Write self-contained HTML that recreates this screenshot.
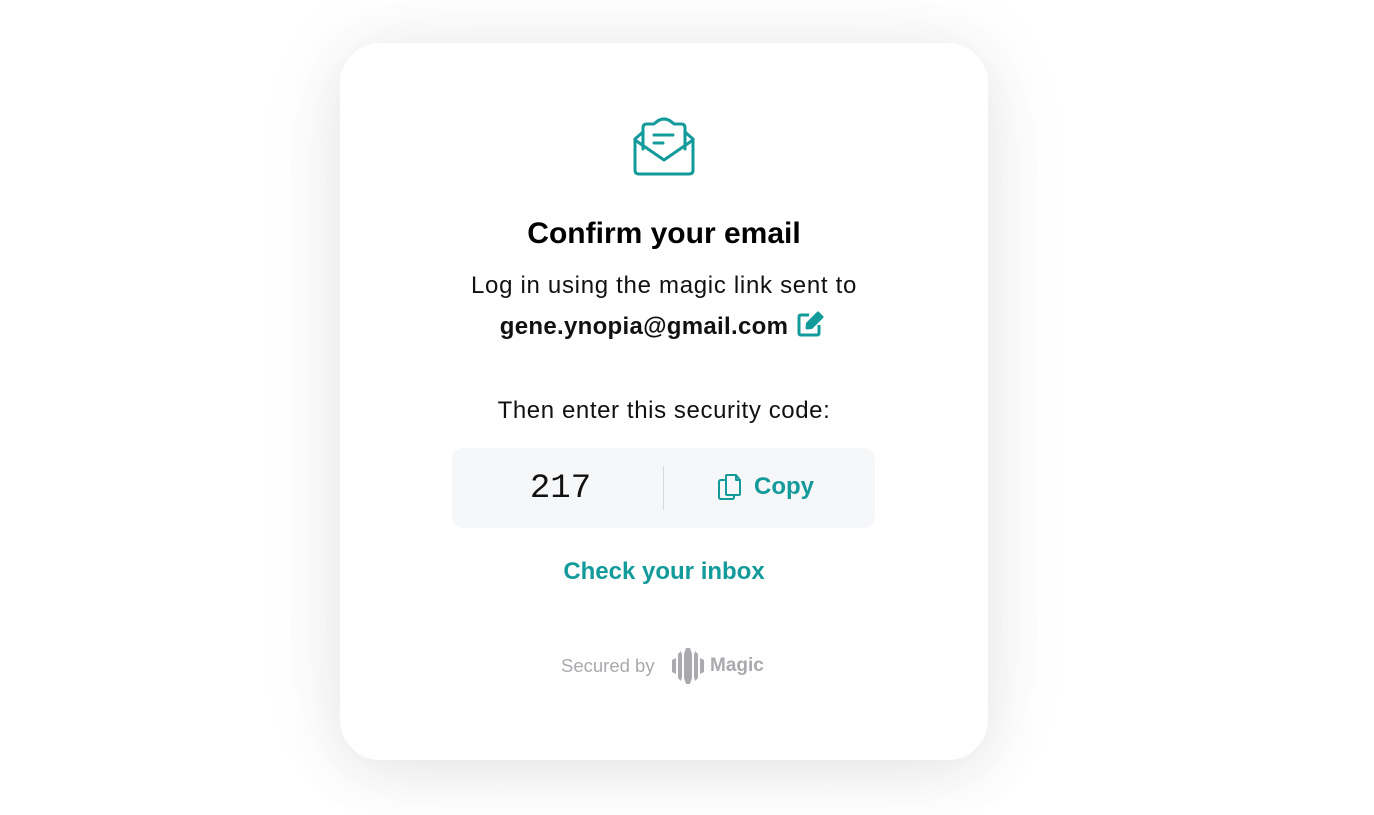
<!DOCTYPE html>
<html><head><meta charset="utf-8"><style>
html,body{margin:0;padding:0;width:1374px;height:815px;background:#fff;overflow:hidden;font-family:"Liberation Sans",sans-serif;}
.card{position:absolute;left:340px;top:43px;width:648px;height:717px;background:#fff;border-radius:40px;box-shadow:0 10px 60px rgba(0,0,0,0.09),0 0 120px rgba(0,0,0,0.04);}
.t{position:absolute;left:0;width:1328px;text-align:center;white-space:nowrap;}
.teal{color:#139a9a;}
</style></head><body>
<div class="card"></div>
<svg style="position:absolute;left:633px;top:114px" width="62" height="62" viewBox="0 0 62 62" fill="none" stroke="#139a9a" stroke-width="3" stroke-linejoin="round" stroke-linecap="round">
<path d="M2 25 L2 56 Q2 60 6 60 L56 60 Q60 60 60 56 L60 25"/>
<path d="M2 25 L10 18 M60 25 L52 18"/>
<path d="M2 26 L31 46 L60 26"/>
<path d="M10 35 L10 14 Q10 10 14 10 L21 10 Q31 0 41 10 L48 10 Q52 10 52 14 L52 35"/>
<path d="M21 21 L40 21 M21 29 L30 29"/>
</svg>
<div class="t" style="top:217px;font-size:30px;font-weight:bold;color:#000;">Confirm your email</div>
<div class="t" style="top:272px;font-size:24px;letter-spacing:0.7px;color:#111;">Log in using the magic link sent to</div>
<div class="t" style="top:313px;font-size:24px;letter-spacing:0.3px;font-weight:bold;color:#111;left:-20px;">gene.ynopia@gmail.com</div>
<svg style="position:absolute;left:797px;top:311px" width="27" height="26" viewBox="0 0 27 26" fill="none" stroke="#139a9a" stroke-width="3" stroke-linejoin="round">
<path d="M12 4 L4 4 Q2 4 2 6 L2 22 Q2 24 4 24 L20 24 Q22 24 22 22 L22 14"/>
<path d="M10 17 L10.5 12.5 L21 2 L25 6 L14.5 16.5 Z" fill="#139a9a"/>
</svg>
<div class="t" style="top:397px;font-size:24px;letter-spacing:0.6px;color:#111;">Then enter this security code:</div>
<div style="position:absolute;left:452px;top:448px;width:423px;height:80px;background:#f6f7f9;border-radius:11px;"></div>
<div style="position:absolute;left:663px;top:466px;width:1px;height:44px;background:#d8d8dc;"></div>
<div style="position:absolute;left:455px;top:470px;width:211px;text-align:center;font-family:'Liberation Mono',monospace;font-size:34px;color:#111;">217</div>
<svg style="position:absolute;left:718px;top:474px" width="24" height="26" viewBox="0 0 24 26" fill="none" stroke="#139a9a" stroke-width="2" stroke-linejoin="round">
<path d="M8 5 L8 20 Q8 21 9 21 L21 21 Q22 21 22 20 L22 6 L18 1 L9 1 Q8 1 8 2 Z"/>
<path d="M18 1 L18 6 L22 6"/>
<path d="M8 6 L3 6 Q1 6 1 8 L1 23 Q1 25 3 25 L14 25 Q16 25 16 23 L16 21"/>
</svg>
<div style="position:absolute;left:754px;top:473px;font-size:24px;font-weight:bold;" class="teal">Copy</div>
<div class="t teal" style="top:558px;font-size:24px;font-weight:bold;">Check your inbox</div>
<div style="position:absolute;left:561px;top:655px;font-size:18.5px;color:#a9a9ae;">Secured by</div>
<svg style="position:absolute;left:672px;top:648px" width="32" height="36" viewBox="0 0 32 36" fill="#a9a9ae">
<path d="M14 0 L18 0 L20 6 L20 30 L18 36 L14 36 L12 30 L12 6 Z"/>
<path d="M6 6 L9 3 L10 7 L10 29 L9 33 L6 30 Z"/>
<path d="M26 6 L23 3 L22 7 L22 29 L23 33 L26 30 Z"/>
<path d="M0 12 L4 10 L4 26 L0 24 Z"/>
<path d="M32 12 L28 10 L28 26 L32 24 Z"/>
</svg>
<div style="position:absolute;left:710px;top:655px;font-size:19px;font-weight:bold;color:#a9a9ae;">Magic</div>
</body></html>
